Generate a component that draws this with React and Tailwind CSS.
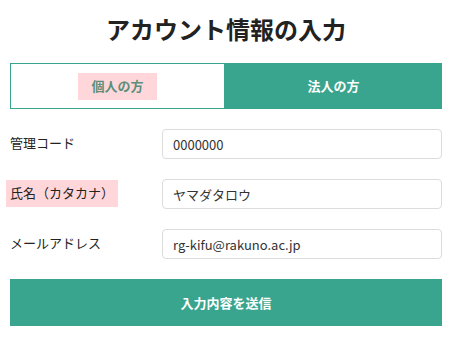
export default function App() {
  const font = { fontFamily: '"Noto Sans CJK JP", "Noto Sans", sans-serif' };

  return (
    <div className="w-[452px] h-[340px] bg-white px-[10px] font-['Noto_Sans_CJK_JP',sans-serif] text-[#222]" style={font}>
      {/* タイトル */}
      <h1 className="pt-[11px] h-[63px] text-center text-[24px] leading-[36px] font-bold tracking-normal text-[#222]">
        アカウント情報の入力
      </h1>

      {/* 個人 / 法人 タブ */}
      <div className="grid grid-cols-[215px_1fr] h-[46px]">
        <button className="flex items-center justify-center border border-[#39a58e] bg-white">
          <span className="bg-[#ffd7da] px-[13px] h-[27px] flex items-center text-[13px] font-bold text-[#5b8f7b]">
            個人の方
          </span>
        </button>
        <button className="flex items-center justify-center bg-[#39a58e] text-[13px] font-bold text-white">
          法人の方
        </button>
      </div>

      {/* 入力フォーム */}
      <div className="mt-[20px] flex flex-col gap-[20px]">
        <Row label="管理コード" value="0000000" />
        <Row label="氏名（カタカナ）" value="ヤマダタロウ" highlight />
        <Row label="メールアドレス" value="rg-kifu@rakuno.ac.jp" />
      </div>

      <button className="mt-[20px] w-full h-[47px] bg-[#39a58e] text-white text-[13px] font-bold">
        入力内容を送信
      </button>
    </div>
  );
}

function Row({ label, value, highlight }) {
  return (
    <div className="grid grid-cols-[152px_1fr] items-center h-[30px]">
      <div className="-ml-[4px] -mt-[2px]">
        <span className={"inline-flex items-center h-[27px] px-[4px] text-[13px] " + (highlight ? "bg-[#ffd7da]" : "")}>
          {label}
        </span>
      </div>
      <input
        readOnly
        value={value}
        className="h-[30px] w-full rounded-[4px] border border-[#dcdcdc] px-[10px] text-[13px] text-[#333] outline-none"
      />
    </div>
  );
}
